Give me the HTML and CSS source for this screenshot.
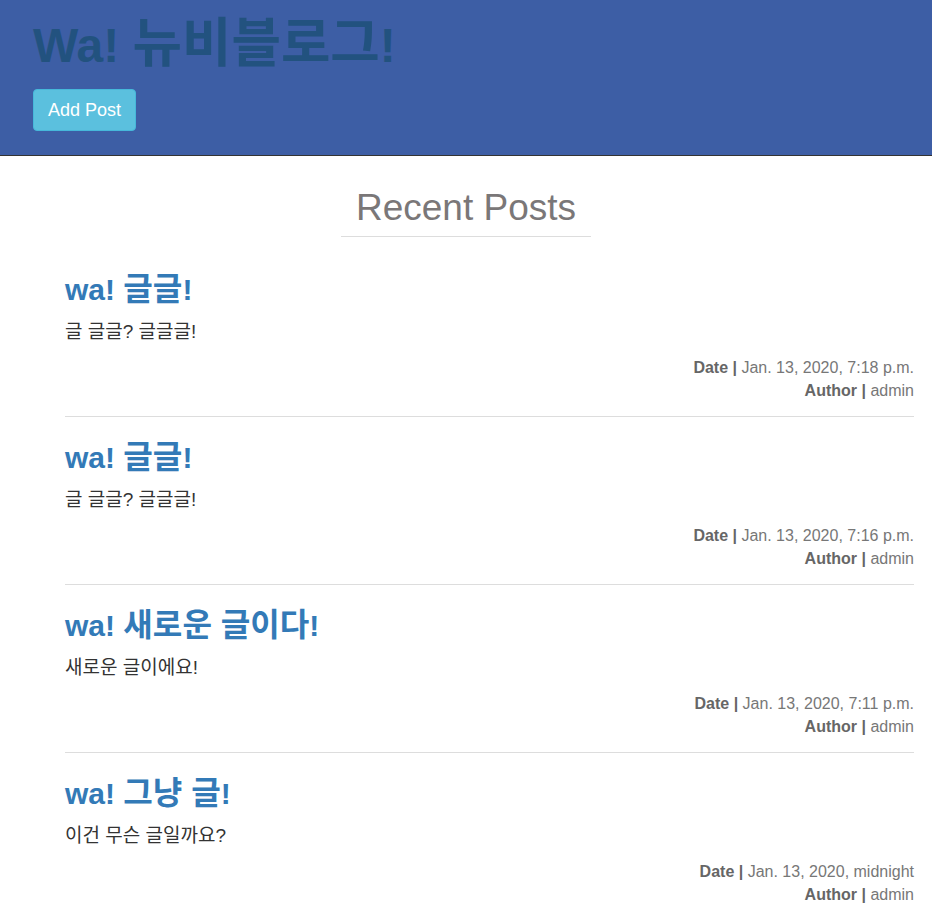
FILE: index.html
```html
<!DOCTYPE html>
<html lang="ko">
<head>
<meta charset="utf-8">
<title>Wa! 뉴비블로그!</title>
<link rel="stylesheet" href="styles.css">
</head>
<body>
<header class="page-header">
  <h1 class="site-title">Wa! <span class="ko">뉴비블로그</span>!</h1>
  <a class="btn-add" href="#">Add Post</a>
</header>
<main class="content">
  <h2 class="section-title">Recent Posts</h2>
  <section class="post-list">
    <article class="post">
      <h3 class="post-title">wa! <span class="ko">글글</span>!</h3>
      <p class="post-body">글 글글? 글글글!</p>
      <div class="post-meta">
        <div><b>Date |</b> Jan. 13, 2020, 7:18 p.m.</div>
        <div><b>Author |</b> admin</div>
      </div>
    </article>
    <article class="post">
      <h3 class="post-title">wa! <span class="ko">글글</span>!</h3>
      <p class="post-body">글 글글? 글글글!</p>
      <div class="post-meta">
        <div><b>Date |</b> Jan. 13, 2020, 7:16 p.m.</div>
        <div><b>Author |</b> admin</div>
      </div>
    </article>
    <article class="post">
      <h3 class="post-title">wa! <span class="ko">새로운 글이다</span>!</h3>
      <p class="post-body">새로운 글이에요!</p>
      <div class="post-meta">
        <div><b>Date |</b> Jan. 13, 2020, 7:11 p.m.</div>
        <div><b>Author |</b> admin</div>
      </div>
    </article>
    <article class="post">
      <h3 class="post-title">wa! <span class="ko">그냥 글</span>!</h3>
      <p class="post-body">이건 무슨 글일까요?</p>
      <div class="post-meta">
        <div><b>Date |</b> Jan. 13, 2020, midnight</div>
        <div><b>Author |</b> admin</div>
      </div>
    </article>
  </section>
</main>
</body>
</html>
```

FILE: styles.css
```css
html, body {
  margin: 0;
  padding: 0;
  background: #fff;
  font-family: "Liberation Sans", "Noto Sans CJK KR", sans-serif;
  color: #333;
}

.page-header {
  background: #3d5ea5;
  border-bottom: 1px solid #333;
  height: 156px;
  box-sizing: border-box;
  padding: 17px 33px 0;
  display: flex;
  flex-direction: column;
  align-items: flex-start;
}

.site-title {
  margin: 0;
  font-size: 48px;
  line-height: 58px;
  height: 58px;
  font-weight: bold;
  color: #22527f;
}

.site-title .ko {
  font-size: 1.12em;
  line-height: 1;
}

.btn-add {
  margin-top: 14px;
  display: inline-flex;
  align-items: center;
  justify-content: center;
  width: 103px;
  height: 42px;
  box-sizing: border-box;
  background: #5bc0de;
  border: 1px solid #46b8da;
  border-radius: 4px;
  color: #fff;
  font-size: 18px;
  text-decoration: none;
}

.content {
  display: flex;
  flex-direction: column;
}

.section-title {
  margin: 30px auto 0;
  width: 250px;
  text-align: center;
  font-size: 37px;
  font-weight: normal;
  line-height: 44px;
  color: #7a7778;
  padding-bottom: 6px;
  border-bottom: 1px solid #ddd;
}

.post-list {
  padding: 0 18px 0 65px;
}

.post {
  border-bottom: 1px solid #ddd;
  padding-top: 15px;
  padding-bottom: 14px;
}

.post:first-of-type {
  padding-top: 27px;
}

.post:last-of-type {
  border-bottom: none;
}

.post-title {
  margin: 8px 0 0;
  font-size: 30px;
  line-height: 36px;
  height: 36px;
  font-weight: bold;
  color: #337ab7;
}

.post-title .ko {
  font-size: 1.07em;
  line-height: 1;
}

.post-body {
  margin: 12px 0 0;
  font-size: 19px;
  line-height: 24px;
  color: #333;
}

.post-meta {
  margin-top: 12px;
  text-align: right;
  font-size: 16px;
  line-height: 23px;
  color: #777;
}

.post-meta b {
  color: #666;
}
```
